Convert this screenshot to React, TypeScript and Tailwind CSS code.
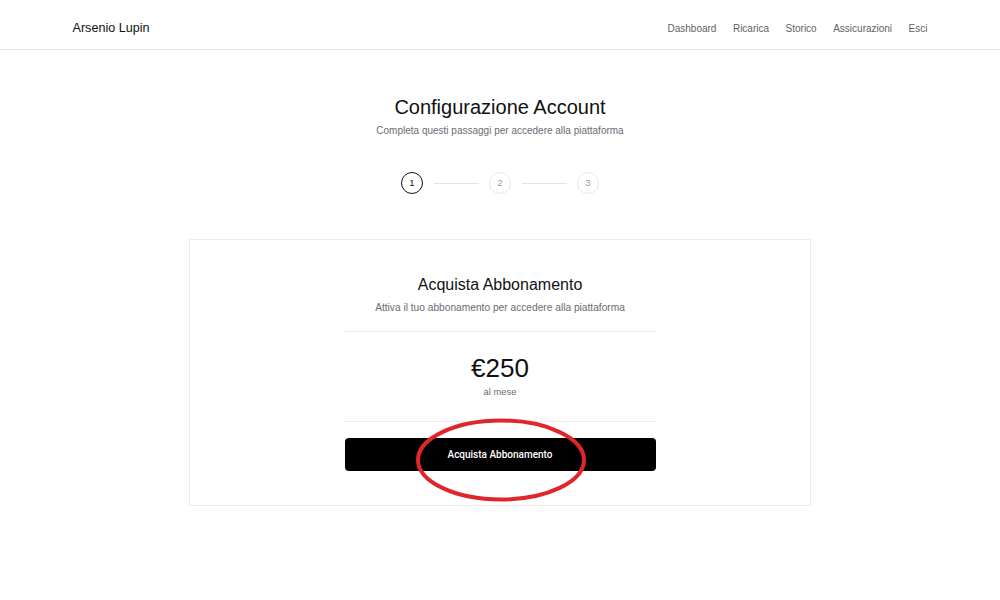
const navLinks = ["Dashboard", "Ricarica", "Storico", "Assicurazioni", "Esci"];

const steps = [1, 2, 3];

function Header() {
  return (
    <header className="h-[50px] border-b border-[#e8e8e8] bg-white">
      <div className="mx-auto flex h-full max-w-[855px] items-center justify-between pt-[8px]">
        <span className="text-[12.6px] text-[#111]">Arsenio Lupin</span>
        <nav className="flex items-center gap-[16.5px]">
          {navLinks.map((link) => (
            <a key={link} href="#" className="text-[10px] text-[#5f5f66]">
              {link}
            </a>
          ))}
        </nav>
      </div>
    </header>
  );
}

function Stepper() {
  return (
    <div className="mt-[34px] flex items-center justify-center">
      {steps.map((step, i) => (
        <div key={step} className="flex items-center">
          {i > 0 && <div className="mx-[10.5px] h-px w-[45px] bg-[#e3e3e3]" />}
          <div
            className={
              step === 1
                ? "flex h-[22px] w-[22px] items-center justify-center rounded-full border border-[#111] text-[9.5px] text-[#111]"
                : "flex h-[22px] w-[22px] items-center justify-center rounded-full border border-[#e6e6e6] text-[9.5px] text-[#9a9a9a]"
            }
          >
            {step}
          </div>
        </div>
      ))}
    </div>
  );
}

function SubscriptionCard() {
  return (
    <div className="relative mx-auto mt-[45px] w-[622px] border border-[#ececec] bg-white px-[34px] pb-[34px] pt-[34px]">
      <div className="mx-auto flex w-[311px] flex-col items-center">
        <h2 className="text-[16px] leading-[22px] text-[#111]">Acquista Abbonamento</h2>
        <p className="mt-[5px] whitespace-nowrap text-[10.2px] leading-[14px] text-[#6b6b72]">
          Attiva il tuo abbonamento per accedere alla piattaforma
        </p>
        <div className="mt-[16px] h-px w-full bg-[#ececec]" />
        <div className="mt-[20px] text-[26px] leading-[32px] text-[#111]">€250</div>
        <div className="mt-[1px] text-[9.4px] leading-[13px] text-[#6b6b72]">al mese</div>
        <div className="mt-[23px] h-px w-full bg-[#ececec]" />
        <button className="mt-[16px] h-[33px] w-full rounded-[4px] bg-black font-['Roboto',sans-serif] text-[10px] font-medium text-white">
          Acquista Abbonamento
        </button>
      </div>
      {/* annotation ring round the button */}
      <svg
        className="pointer-events-none absolute left-[224px] top-[177px]"
        width="174"
        height="86"
        viewBox="0 0 174 86"
      >
        <ellipse cx="87" cy="43" rx="83" ry="39.5" fill="none" stroke="#e0262b" strokeWidth="4" />
      </svg>
    </div>
  );
}

export default function App() {
  return (
    <div className="min-h-[600px] bg-white font-['Liberation_Sans',Arial,sans-serif]">
      <Header />
      <main className="flex flex-col items-center">
        <h1 className="mt-[43px] text-[20px] leading-[28px] text-[#111]">Configurazione Account</h1>
        <p className="mt-[3px] text-[10px] leading-[14px] text-[#6b6b72]">
          Completa questi passaggi per accedere alla piattaforma
        </p>
        <Stepper />
        <SubscriptionCard />
      </main>
    </div>
  );
}
